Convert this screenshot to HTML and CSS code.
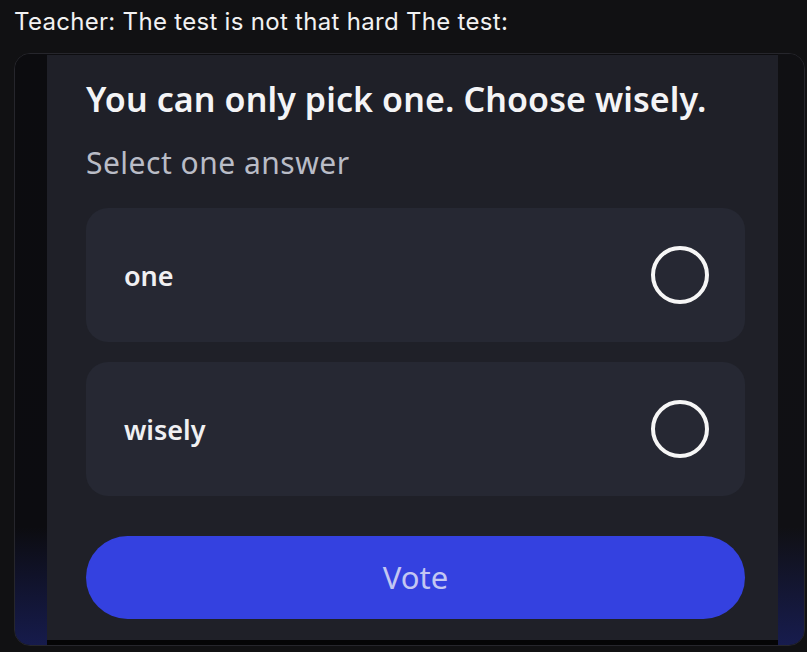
FILE: index.html
```html
<!DOCTYPE html>
<html lang="en">

<head>
    <meta charset="UTF-8">
    <meta name="viewport" content="width=device-width, initial-scale=1.0">
    <title>Poll</title>
    <link rel="stylesheet" href="styles.css">
</head>

<body>
    <p class="caption">Teacher: The test is not that hard The test:</p>
    <div class="frame">
        <div class="side"></div>
        <div class="shot">
            <h1 class="question">You can only pick one. Choose wisely.</h1>
            <p class="hint">Select one answer</p>
            <div class="option">
                <span>one</span>
                <span class="radio"></span>
            </div>
            <div class="option">
                <span>wisely</span>
                <span class="radio"></span>
            </div>
            <a href="#" class="vote">Vote</a>
        </div>
        <div class="side side-r"></div>
    </div>
</body>

</html>
```

FILE: styles.css
```css
* {
    padding: 0;
    margin: 0;
    box-sizing: border-box;
}

a {
    text-decoration: none;
}

body {
    background: #111113;
    font-family: Inter, "Liberation Sans", sans-serif;
    color: #f2f2f2;
}

.caption {
    padding: 7px 14px 0;
    height: 53px;
    font-size: 24px;
    line-height: 30px;
    letter-spacing: 0.3px;
}

.frame {
    display: flex;
    margin-left: 14px;
    margin-right: 2px;
    height: 593px;
    border: 1px solid #26262c;
    border-radius: 16px;
    overflow: hidden;
    background: #0d0d10;
}

.side {
    width: 32px;
    background: linear-gradient(to bottom, #0c0c0f 0%, #0c0c10 80%, #161b4c 100%);
}

.side-r {
    width: 26px;
    background: linear-gradient(to bottom, #101013 0%, #101014 80%, #171c4e 100%);
}

.shot {
    width: 732px;
    margin-top: 1px;
    background: #1f2028;
    border-bottom: 5px solid #050506;
    padding: 21px 33px 0 39px;
    font-family: "Noto Sans", sans-serif;
}

.question {
    font-size: 34px;
    font-weight: 600;
    line-height: 46px;
    color: #f4f4f6;
    letter-spacing: 0.1px;
}

.hint {
    margin-top: 22px;
    font-size: 30px;
    line-height: 38px;
    color: #b9bcc6;
    letter-spacing: 0.5px;
}

.option {
    display: flex;
    align-items: center;
    justify-content: space-between;
    margin-top: 26px;
    height: 134px;
    padding: 0 36px 0 38px;
    border-radius: 22px;
    background: #262833;
    font-size: 27px;
    font-weight: 600;
    color: #f0f0f2;
}

.option + .option {
    margin-top: 20px;
}

.radio {
    width: 58px;
    height: 58px;
    border: 4px solid #f6f6f6;
    border-radius: 50%;
}

.vote {
    display: block;
    margin-top: 40px;
    height: 83px;
    border-radius: 42px;
    background: #3441e0;
    text-align: center;
    line-height: 83px;
    font-size: 31px;
    color: #c3c7f2;
}
```
